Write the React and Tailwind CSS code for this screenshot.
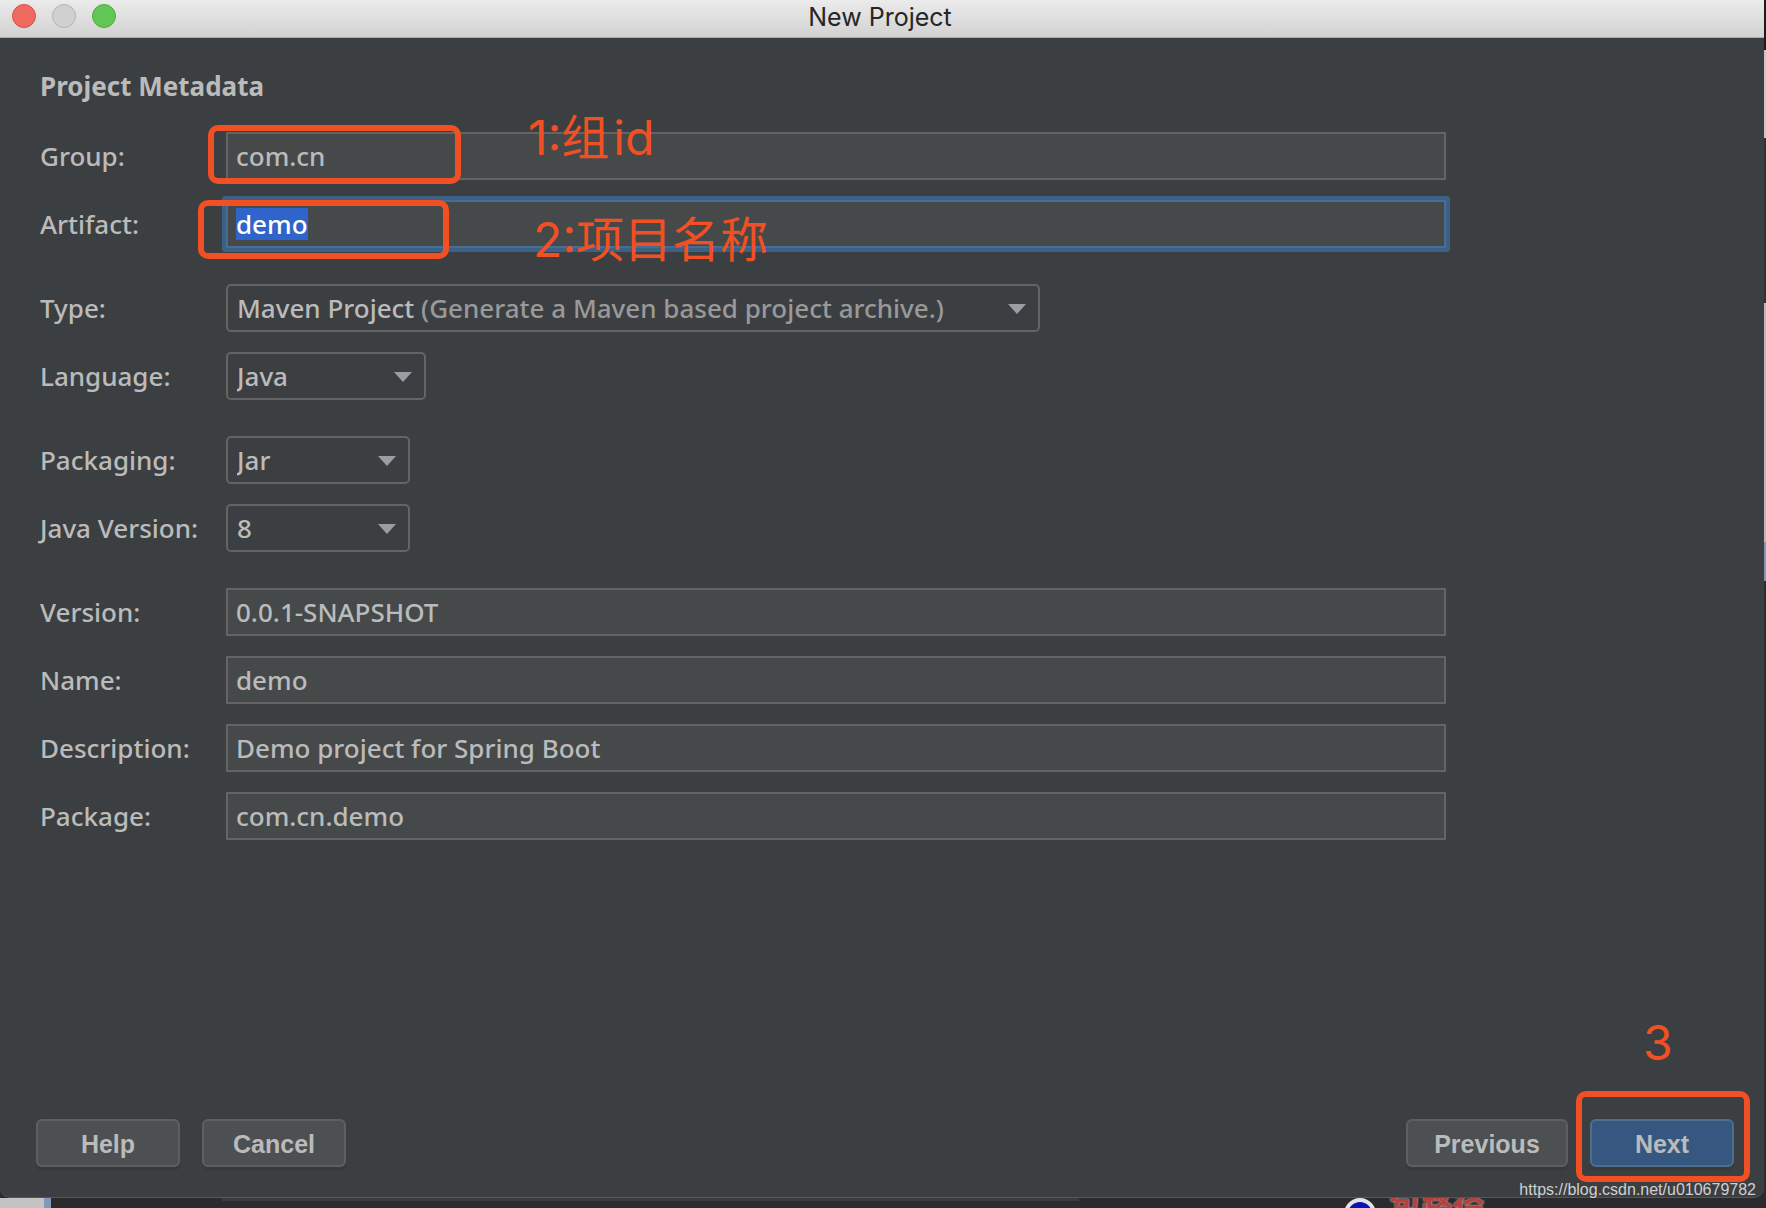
const UI = "font-['Noto_Sans','Open_Sans',sans-serif]";

function Arrow() {
  return (
    <svg
      viewBox="0 0 18 10"
      aria-hidden="true"
      className="pointer-events-none absolute right-[14px] top-5 h-[10px] w-[18px] fill-[#9a9da1]"
    >
      <path d="M0 0h18L9 10z" />
    </svg>
  );
}

function Row({ id, label, children }) {
  return (
    <div className="flex h-12 items-center">
      <label htmlFor={id} className="w-[186px] shrink-0 whitespace-nowrap">
        {label}
      </label>
      <div className="relative h-12 min-w-0 flex-1">{children}</div>
    </div>
  );
}

function TextField({ id, value }) {
  return (
    <input
      id={id}
      type="text"
      defaultValue={value}
      className="block h-12 w-full border-2 border-[#646464] bg-[#45494a] px-2 text-[#bbbbbb] outline-none"
    />
  );
}

function DropDown({ id, width, options }) {
  return (
    <div className={"relative h-12 " + width}>
      <select
        id={id}
        className="block h-12 w-full appearance-none rounded-[5px] border-2 border-[#646464] bg-[#3c3f41] pl-[9px] pr-9 text-[#bbbbbb] outline-none"
      >
        {options.map((o) => (
          <option key={o}>{o}</option>
        ))}
      </select>
      <Arrow />
    </div>
  );
}

function Button({ children, width, primary }) {
  return (
    <button
      type="button"
      className={
        "flex h-12 items-center justify-center rounded-[6px] border-2 pt-[2px] text-[25px] leading-none font-bold text-[#bbbbbb] shadow-[0_4px_0_#383a3b] font-['Liberation_Sans',Arial,sans-serif] " +
        width +
        (primary ? " border-[#4c708c] bg-[#365880]" : " border-[#5e6060] bg-[#4c5052]")
      }
    >
      {children}
    </button>
  );
}

const NOTE =
  "pointer-events-none absolute whitespace-nowrap text-[48px] font-normal leading-[56px] text-[#f05023] font-['Inter','Noto_Sans_CJK_SC',sans-serif]";
const RING = "pointer-events-none absolute rounded-[10px] border-[6px] border-[#f05023]";

export default function App() {
  return (
    <div className="flex h-screen flex-col overflow-hidden bg-[#2b2b2d]">
      <div className="flex min-h-0 flex-1">
        <main
          className={
            "flex min-w-0 flex-1 flex-col rounded-b-[10px] border-b border-[#55585a] bg-[#3c3f41] text-[26px] font-medium text-[#bbbbbb] " +
            UI
          }
        >
          <header className="relative flex h-[38px] shrink-0 items-center justify-center border-b border-[#acacac] bg-linear-to-b from-[#ebebeb] to-[#d2d2d2] pr-1">
            <div className="absolute left-3 top-1 flex gap-4">
              <button type="button" aria-label="Close" className="size-6 rounded-full border border-[#d95249] bg-[#ee6a5f]" />
              <button type="button" aria-label="Minimize" className="size-6 rounded-full border border-[#b4b4b4] bg-[#d0d0d0]" />
              <button type="button" aria-label="Zoom" className="size-6 rounded-full border border-[#54a93f] bg-[#62c655]" />
            </div>
            <h1 className="pb-1 text-[25px] font-normal leading-8 text-[#262626] font-['Inter',sans-serif]">New Project</h1>
          </header>

          <form className="flex min-h-0 flex-1 flex-col" onSubmit={(e) => e.preventDefault()}>
            <div className="pl-10 pr-[318px] pt-8">
              <h2 className="mb-[30px] h-8 font-bold leading-8">Project Metadata</h2>
              <div className="flex flex-col gap-9">
                <div className="flex flex-col gap-5">
                  <Row id="group" label="Group:">
                    <TextField id="group" value="com.cn" />
                    <div className={RING + " -left-[18px] -top-[7px] h-[59px] w-[253px]"} />
                    <span className={NOTE + " left-[302px] -top-[22px]"}>
                      1:组<span className="ml-1">id</span>
                    </span>
                  </Row>
                  <Row id="artifact" label="Artifact:">
                    <div className="flex h-12 items-start rounded-[1px] border-2 border-[#466d94] bg-[#45494a] px-2 pt-[6px] shadow-[0_0_0_4px_#3d6185]">
                      <input
                        id="artifact"
                        type="text"
                        defaultValue="demo"
                        className="h-8 w-[72px] bg-[#2f65ca] leading-8 text-white outline-none"
                      />
                    </div>
                    <div className={RING + " -left-7 top-0 h-[59px] w-[251px]"} />
                    <span className={NOTE + " left-[307px] top-3"}>2:项目名称</span>
                  </Row>
                </div>
                <div className="flex flex-col gap-5">
                  <Row id="type" label="Type:">
                    <div className="relative h-12 w-[814px]">
                      <select
                        id="type"
                        className="block h-12 w-full appearance-none rounded-[5px] border-2 border-[#646464] bg-[#3c3f41] pl-[9px] pr-9 text-transparent outline-none"
                      >
                        <option>Maven Project (Generate a Maven based project archive.)</option>
                      </select>
                      <div
                        aria-hidden="true"
                        className="pointer-events-none absolute inset-0 flex items-center whitespace-pre pl-[11px]"
                      >
                        Maven Project <span className="text-[#999999]">(Generate a Maven based project archive.)</span>
                      </div>
                      <Arrow />
                    </div>
                  </Row>
                  <Row id="language" label="Language:">
                    <DropDown id="language" width="w-[200px]" options={["Java", "Kotlin", "Groovy"]} />
                  </Row>
                </div>
                <div className="flex flex-col gap-5">
                  <Row id="packaging" label="Packaging:">
                    <DropDown id="packaging" width="w-[184px]" options={["Jar", "War"]} />
                  </Row>
                  <Row id="java" label="Java Version:">
                    <DropDown id="java" width="w-[184px]" options={["8", "11", "14"]} />
                  </Row>
                </div>
                <div className="flex flex-col gap-5">
                  <Row id="version" label="Version:">
                    <TextField id="version" value="0.0.1-SNAPSHOT" />
                  </Row>
                  <Row id="name" label="Name:">
                    <TextField id="name" value="demo" />
                  </Row>
                  <Row id="description" label="Description:">
                    <TextField id="description" value="Demo project for Spring Boot" />
                  </Row>
                  <Row id="package" label="Package:">
                    <TextField id="package" value="com.cn.demo" />
                  </Row>
                </div>
              </div>
            </div>

            <footer className="mt-auto flex items-center gap-[22px] pb-[30px] pl-9 pr-[30px]">
              <Button width="w-36">Help</Button>
              <Button width="w-36">Cancel</Button>
              <div className="flex-1" />
              <Button width="w-[162px]">Previous</Button>
              <div className="relative">
                <Button width="w-36" primary>
                  Next
                </Button>
                <div className={RING + " -left-[14px] -top-7 h-[91px] w-[174px]"} />
                <span className={NOTE + " -top-[104px] left-[53px]"}>3</span>
                <a
                  href="https://blog.csdn.net/u010679782"
                  className="absolute -right-[22px] top-[61px] whitespace-nowrap text-base font-normal leading-5 text-[#d0d0d0] font-['Liberation_Sans',Arial,sans-serif]"
                >
                  https://blog.csdn.net/u010679782
                </a>
              </div>
            </footer>
          </form>
        </main>
        <div aria-hidden="true" className="flex w-[2px] shrink-0 flex-col">
          <div className="h-[50px] bg-[#1c1c1c]" />
          <div className="h-[88px] bg-[#c9c6c3]" />
          <div className="h-[165px] bg-[#2f3133]" />
          <div className="h-[239px] bg-[#bdbab8]" />
          <div className="h-[39px] bg-[#8496b0]" />
          <div className="flex-1 bg-[#2b2d2f]" />
        </div>
      </div>
      <div aria-hidden="true" className="flex h-[10px] shrink-0 items-start overflow-hidden">
        <div className="h-full w-11 bg-[#c4c4c4]" />
        <div className="h-full w-[7px] bg-[#8099bd]" />
        <div className="w-[171px]" />
        <div className="h-[3px] w-[857px] bg-[#3a3b3d]" />
        <div className="w-[265px]" />
        <div className="size-8 rounded-full border-4 border-[#e4e4e8] bg-[#0a14b4]" />
        <div className="-mt-3 ml-[13px] text-[32px] font-bold leading-8 text-[#b5403c] [text-shadow:0_0_2px_#ddd] font-['Noto_Sans_CJK_SC',sans-serif]">
          包路径
        </div>
      </div>
    </div>
  );
}
